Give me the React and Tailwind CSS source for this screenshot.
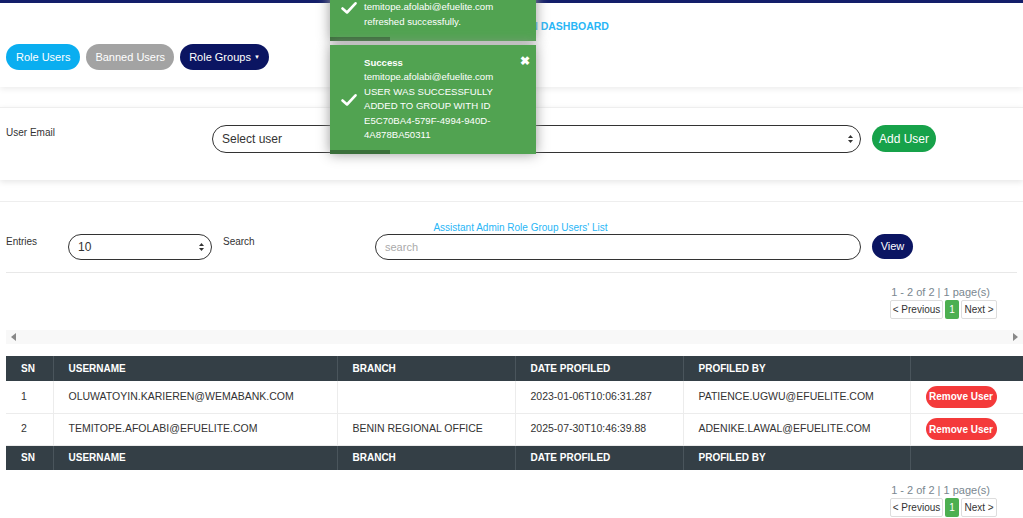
import React from "react";

const rows = [
  {
    sn: 1,
    username: "OLUWATOYIN.KARIEREN@WEMABANK.COM",
    branch: "",
    date: "2023-01-06T10:06:31.287",
    by: "PATIENCE.UGWU@EFUELITE.COM",
  },
  {
    sn: 2,
    username: "TEMITOPE.AFOLABI@EFUELITE.COM",
    branch: "BENIN REGIONAL OFFICE",
    date: "2025-07-30T10:46:39.88",
    by: "ADENIKE.LAWAL@EFUELITE.COM",
  },
];

const Arrows = () => (
  <svg width="7" height="10" viewBox="0 0 7 10" className="absolute right-[6px] top-1/2 -translate-y-1/2">
    <path d="M3.5 1 L6 4 H1 Z" fill="#333" />
    <path d="M3.5 9 L6 6 H1 Z" fill="#333" />
  </svg>
);

const Check = () => (
  <svg width="16" height="13" viewBox="0 0 16 13">
    <path d="M1.5 7 L6 11 L14.5 1.8" stroke="white" strokeWidth="2.6" fill="none" strokeLinecap="round" strokeLinejoin="round" />
  </svg>
);

const Pager = () => (
  <div className="flex flex-col items-end pr-[26px]">
    <div className="text-[11px] text-[#7a8790] leading-[14px] pr-[7px]">1 - 2 of 2 | 1 page(s)</div>
    <div className="flex items-center gap-[2px] mt-[1px] text-[10px] text-[#333]">
      <button className="h-[19px] w-[53px] border border-[#ddd] bg-white rounded-[2px]">&lt; Previous</button>
      <button className="h-[19px] w-[14px] bg-[#4caf50] text-white rounded-[2px]">1</button>
      <button className="h-[19px] w-[36px] border border-[#ddd] bg-white rounded-[2px]">Next &gt;</button>
    </div>
  </div>
);

const HeadRow = () => (
  <tr className="bg-[#343f46] text-white font-bold text-[10px] h-[25px]">
    <td className="pl-[15px] border-r border-[#4a555c]">SN</td>
    <td className="pl-[15px] border-r border-[#4a555c]">USERNAME</td>
    <td className="pl-[15px] border-r border-[#4a555c]">BRANCH</td>
    <td className="pl-[15px] border-r border-[#4a555c]">DATE PROFILED</td>
    <td className="pl-[15px] border-r border-[#4a555c]">PROFILED BY</td>
    <td></td>
  </tr>
);

const Toast = ({ className, lines, title, closable }) => (
  <div className={"absolute left-[330px] w-[206px] bg-[#51a351] text-white shadow-[0_0_12px_#999] text-[9.6px] leading-[14.4px] pl-[34px] pr-[12px] pt-[11px] pb-[12px] " + className}>
    <div className="absolute left-[11px] top-1/2 -translate-y-1/2">
      <Check />
    </div>
    <div className="font-bold">{title}</div>
    {lines.map((l) => (
      <div key={l}>{l}</div>
    ))}
    {closable && (
      <span className="absolute right-[6px] top-[10px] text-[12px] font-bold leading-none">✖</span>
    )}
    <div className="absolute left-0 bottom-0 h-[4px] w-[60px] bg-[#3a6f3a]" />
  </div>
);

export default function App() {
  return (
    <div
      className="relative w-full h-[518px] overflow-hidden bg-white text-[#333]"
      style={{ fontFamily: '"Liberation Sans", Arial, sans-serif' }}
    >
      <div className="h-[3px] bg-[#141f6b]" />

      <div className="shadow-[0_2px_6px_rgba(0,0,0,0.08)] px-[6px] pt-[16px] pb-[17px]">
        <div className="text-center text-[10.5px] font-bold text-[#29b6f6] pl-[28px] leading-[14px]">
          ASSISTANT ADMIN DASHBOARD
        </div>
        <div className="flex gap-[6px] mt-[11px]">
          <button className="h-[26px] px-[10px] rounded-full bg-[#0aaef0] text-white text-[11px]">Role Users</button>
          <button className="h-[26px] px-[9px] rounded-full bg-[#a3a3a3] text-white text-[11px]">Banned Users</button>
          <button className="h-[26px] px-[9px] rounded-full bg-[#0b1562] text-white text-[11px] flex items-center gap-[3px]">
            Role Groups <span className="text-[6px] leading-none">▼</span>
          </button>
        </div>
      </div>

      <div className="mt-[20px] border-t border-[#eee] shadow-[0_2px_6px_rgba(0,0,0,0.1)] px-[6px] pt-[17px] pb-[27px] flex items-start">
        <div className="w-[206px] text-[10px]">User Email</div>
        <div className="relative w-[649px] h-[28px] rounded-full border border-[#333] flex items-center pl-[9px] text-[12px]">
          Select user
          <Arrows />
        </div>
        <button className="ml-[11px] w-[64px] h-[27px] rounded-full bg-[#17a24a] text-white text-[12px]">Add User</button>
      </div>

      <div className="mt-[21px] border-t border-[#eee] px-[6px]">
        <div className="text-center text-[10px] text-[#29b6f6] pt-[20px] leading-[12px] pl-[18px]">
          Assistant Admin Role Group Users' List
        </div>
        <div className="flex items-start pb-[12px] border-b border-[#e8e8e8]">
          <div className="w-[62px] text-[10px]">Entries</div>
          <div className="relative w-[144px] h-[26px] rounded-full border border-[#333] flex items-center pl-[9px] text-[12px]">
            10
            <Arrows />
          </div>
          <div className="ml-[11px] w-[152px] text-[10px]">Search</div>
          <div className="w-[486px] h-[26px] rounded-full border border-[#333] flex items-center pl-[9px] text-[11px] text-[#aaa]">
            search
          </div>
          <button className="ml-[11px] w-[41px] h-[25px] rounded-full bg-[#0b1562] text-white text-[11px]">View</button>
        </div>
      </div>

      <div className="pt-[12px]">
        <Pager />
      </div>

      <div className="mt-[11px] ml-[6px] h-[14px] bg-[#f8f8f8] flex items-center justify-between px-[5px]">
        <span className="w-0 h-0 border-y-[4px] border-y-transparent border-r-[5px] border-r-[#888]" />
        <span className="w-0 h-0 border-y-[4px] border-y-transparent border-l-[5px] border-l-[#888]" />
      </div>

      <div className="mt-[12px] ml-[6px] overflow-hidden">
        <table className="w-[1030px] border-collapse text-[10.5px] text-left">
          <colgroup>
            <col className="w-[47px]" />
            <col className="w-[284px]" />
            <col className="w-[178px]" />
            <col className="w-[168px]" />
            <col className="w-[227px]" />
            <col />
          </colgroup>
          <tbody>
            <HeadRow />
            {rows.map((r) => (
              <tr key={r.sn} className="h-[32px] border-b border-[#ececec]">
                <td className="pl-[15px] border-r border-[#ececec]">{r.sn}</td>
                <td className="pl-[15px] border-r border-[#ececec]">{r.username}</td>
                <td className="pl-[15px] border-r border-[#ececec]">{r.branch}</td>
                <td className="pl-[15px] border-r border-[#ececec]">{r.date}</td>
                <td className="pl-[15px] border-r border-[#ececec]">{r.by}</td>
                <td className="pl-[15px]">
                  <button className="h-[22px] w-[71px] rounded-full bg-[#f43a3a] text-white text-[10px] font-bold">
                    Remove User
                  </button>
                </td>
              </tr>
            ))}
            <HeadRow />
          </tbody>
        </table>
      </div>

      <div className="pt-[13px]">
        <Pager />
      </div>

      <Toast
        className="top-[-25px]"
        title="Success"
        lines={["temitope.afolabi@efuelite.com", "refreshed successfully."]}
      />
      <Toast
        className="top-[45px]"
        title="Success"
        closable
        lines={[
          "temitope.afolabi@efuelite.com",
          "USER WAS SUCCESSFULLY ADDED TO GROUP WITH ID E5C70BA4-579F-4994-940D-4A878BA50311",
        ]}
      />
    </div>
  );
}
